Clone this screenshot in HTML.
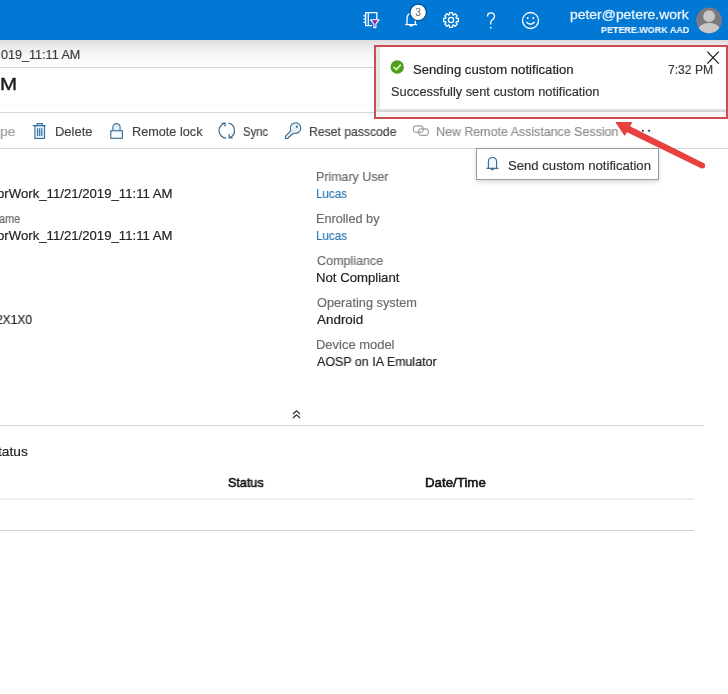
<!DOCTYPE html>
<html><head><meta charset="utf-8"><style>
html,body{margin:0;padding:0;width:728px;height:694px;overflow:hidden;background:#fff;}
body{position:relative;font-family:"Liberation Sans",sans-serif;}
.t{position:absolute;white-space:nowrap;will-change:transform;-webkit-text-stroke:0.18px currentColor;}
</style></head><body>
<div style="position:absolute;left:0px;top:0px;width:728px;height:40px;background:#0078d4"></div>
<div style="position:absolute;left:0px;top:40px;width:728px;height:27px;background:linear-gradient(#dedede,#eeeeee 30%,#f6f6f6 55%,#fbfbfb 80%,#fcfcfc)"></div>
<div style="position:absolute;left:0px;top:67px;width:728px;height:1px;background:#d2d2d2"></div>
<div class="t" style="left:1.00px;top:48.98px;font-size:12.6px;line-height:12.6px;color:#3c3c3c;font-weight:normal;">019_11:11 AM</div>
<div class="t" style="left:-0.09px;top:76.44px;font-size:17.2px;line-height:17.2px;color:#1e1e1e;font-weight:normal;-webkit-text-stroke:0.4px #1e1e1e;transform:scaleX(1.1917);transform-origin:0 0;">M</div>
<div style="position:absolute;left:0px;top:105px;width:728px;height:1px;background:#f7f7f7"></div>
<div style="position:absolute;left:0px;top:111.6px;width:728px;height:1.2px;background:#d8d8d8"></div>
<div style="position:absolute;left:0px;top:148.3px;width:728px;height:1.2px;background:#dadada"></div>
<div class="t" style="left:-0.50px;top:126.35px;font-size:12.7px;line-height:12.7px;color:#a0a0a0;font-weight:normal;transform:scaleX(1.1071);transform-origin:0 0;">pe</div>
<div class="t" style="left:55.18px;top:126.35px;font-size:12.7px;line-height:12.7px;color:#444;font-weight:normal;transform:scaleX(1.0229);transform-origin:0 0;">Delete</div>
<div class="t" style="left:132.01px;top:126.35px;font-size:12.7px;line-height:12.7px;color:#444;font-weight:normal;transform:scaleX(0.9943);transform-origin:0 0;">Remote lock</div>
<div class="t" style="left:243.00px;top:126.35px;font-size:12.7px;line-height:12.7px;color:#444;font-weight:normal;transform:scaleX(0.8929);transform-origin:0 0;">Sync</div>
<div class="t" style="left:308.54px;top:126.35px;font-size:12.7px;line-height:12.7px;color:#444;font-weight:normal;transform:scaleX(0.9611);transform-origin:0 0;">Reset passcode</div>
<div class="t" style="left:435.77px;top:126.35px;font-size:12.7px;line-height:12.7px;color:#8e8e8e;font-weight:normal;transform:scaleX(0.9797);transform-origin:0 0;">New Remote Assistance Session</div>
<div class="t" style="left:316.32px;top:171.15px;font-size:12.7px;line-height:12.7px;color:#6b6b6b;font-weight:normal;transform:scaleX(0.9788);transform-origin:0 0;">Primary User</div>
<div class="t" style="left:316.38px;top:187.90px;font-size:12.7px;line-height:12.7px;color:#2b79b5;font-weight:normal;transform:scaleX(0.9152);transform-origin:0 0;">Lucas</div>
<div class="t" style="left:316.30px;top:213.15px;font-size:12.7px;line-height:12.7px;color:#6b6b6b;font-weight:normal;transform:scaleX(0.9952);transform-origin:0 0;">Enrolled by</div>
<div class="t" style="left:316.38px;top:229.90px;font-size:12.7px;line-height:12.7px;color:#2b79b5;font-weight:normal;transform:scaleX(0.9152);transform-origin:0 0;">Lucas</div>
<div class="t" style="left:317.30px;top:255.15px;font-size:12.7px;line-height:12.7px;color:#6b6b6b;font-weight:normal;transform:scaleX(0.9881);transform-origin:0 0;">Compliance</div>
<div class="t" style="left:316.26px;top:271.90px;font-size:12.7px;line-height:12.7px;color:#222;font-weight:normal;transform:scaleX(1.0375);transform-origin:0 0;">Not Compliant</div>
<div class="t" style="left:317.30px;top:297.15px;font-size:12.7px;line-height:12.7px;color:#6b6b6b;font-weight:normal;transform:scaleX(1.0051);transform-origin:0 0;">Operating system</div>
<div class="t" style="left:317.30px;top:313.90px;font-size:12.7px;line-height:12.7px;color:#222;font-weight:normal;transform:scaleX(1.0581);transform-origin:0 0;">Android</div>
<div class="t" style="left:316.28px;top:339.15px;font-size:12.7px;line-height:12.7px;color:#6b6b6b;font-weight:normal;transform:scaleX(1.0213);transform-origin:0 0;">Device model</div>
<div class="t" style="left:317.30px;top:355.90px;font-size:12.7px;line-height:12.7px;color:#222;font-weight:normal;transform:scaleX(0.9828);transform-origin:0 0;">AOSP on IA Emulator</div>
<div class="t" style="left:-3.20px;top:188.15px;font-size:12.7px;line-height:12.7px;color:#222;font-weight:normal;transform:scaleX(1.0384);transform-origin:0 0;">orWork_11/21/2019_11:11 AM</div>
<div class="t" style="left:-0.80px;top:213.15px;font-size:12.7px;line-height:12.7px;color:#6b6b6b;font-weight:normal;transform:scaleX(0.8667);transform-origin:0 0;">ame</div>
<div class="t" style="left:-3.20px;top:229.90px;font-size:12.7px;line-height:12.7px;color:#222;font-weight:normal;transform:scaleX(1.0384);transform-origin:0 0;">orWork_11/21/2019_11:11 AM</div>
<div class="t" style="left:-4.50px;top:313.65px;font-size:12.7px;line-height:12.7px;color:#222;font-weight:normal;transform:scaleX(0.9474);transform-origin:0 0;">2X1X0</div>
<div style="position:absolute;left:0px;top:425px;width:704px;height:1px;background:#d6d6d6"></div>
<div class="t" style="left:-2.00px;top:445.19px;font-size:13.6px;line-height:13.6px;color:#222;font-weight:normal;transform:scaleX(1.0103);transform-origin:0 0;">tatus</div>
<div class="t" style="left:227.60px;top:476.96px;font-size:12.8px;line-height:12.8px;color:#111;font-weight:normal;-webkit-text-stroke:0.55px #111;transform:scaleX(0.9806);transform-origin:0 0;">Status</div>
<div class="t" style="left:425.21px;top:476.96px;font-size:12.8px;line-height:12.8px;color:#111;font-weight:normal;-webkit-text-stroke:0.55px #111;transform:scaleX(1.0388);transform-origin:0 0;">Date/Time</div>
<div style="position:absolute;left:0px;top:498px;width:694px;height:2px;background:#ededed"></div>
<div style="position:absolute;left:0px;top:530px;width:694px;height:1px;background:#cfcfcf"></div>
<div class="t" style="left:569.98px;top:8.30px;font-size:13.7px;line-height:13.7px;color:#eaf3fb;font-weight:normal;-webkit-text-stroke:0.3px #eaf3fb;transform:scaleX(1.0174);transform-origin:0 0;">peter@petere.work</div>
<div class="t" style="left:601.00px;top:24.97px;font-size:9.6px;line-height:9.6px;color:#eaf3fb;font-weight:bold;transform:scaleX(0.9340);transform-origin:0 0;">PETERE.WORK AAD</div>
<div style="position:absolute;left:376px;top:46.5px;width:349.5px;height:70.5px;background:#fbf6f6"></div>
<div style="position:absolute;left:376px;top:46.5px;width:349.5px;height:62.7px;background:linear-gradient(90deg,#e6e4e8,#eeecf0 50%,#f6f5f7)"></div>
<div style="position:absolute;left:380px;top:46.5px;width:344.5px;height:62.7px;background:#fff"></div>
<div style="position:absolute;left:376px;top:109.2px;width:349.5px;height:3.3px;background:linear-gradient(#e2e2e2,#d2d2d2)"></div>
<div style="position:absolute;left:374px;top:44.5px;width:353.5px;height:74px;border:2px solid #cc4c55;box-sizing:border-box"></div>
<div class="t" style="left:413.39px;top:63.40px;font-size:13.0px;line-height:13.0px;color:#222;font-weight:normal;transform:scaleX(1.0101);transform-origin:0 0;">Sending custom notification</div>
<div class="t" style="left:667.60px;top:64.49px;font-size:12.0px;line-height:12.0px;color:#3c3c3c;font-weight:normal;transform:scaleX(1.0091);transform-origin:0 0;">7:32 PM</div>
<div class="t" style="left:390.90px;top:85.66px;font-size:12.8px;line-height:12.8px;color:#333;font-weight:normal;">Successfully sent custom notification</div>
<div style="position:absolute;left:476px;top:148px;width:183px;height:32px;border:1px solid #9a9a9a;background:#fff;box-sizing:border-box;box-shadow:0 2px 5px rgba(0,0,0,0.16)"></div>
<div class="t" style="left:507.69px;top:158.50px;font-size:13.0px;line-height:13.0px;color:#333;font-weight:normal;transform:scaleX(1.0093);transform-origin:0 0;">Send custom notification</div>


<svg width="728" height="694" style="position:absolute;left:0;top:0">
 <!-- directory icon -->
 <g fill="none" stroke="#fff" stroke-width="1.3">
  <path d="M372 25.6 L365.6 25.6 L365.6 12.6 L376.8 12.6 L376.8 19.6"/>
  <line x1="368.3" y1="13" x2="368.3" y2="25.3"/>
  <line x1="363.4" y1="15.8" x2="365.6" y2="15.8"/><line x1="363.4" y1="19.1" x2="365.6" y2="19.1"/><line x1="363.4" y1="22.4" x2="365.6" y2="22.4"/>
 </g>
 <path d="M370.6 19.8 L379 19.8 L375.9 23.8 L375.9 27.6 L373.9 27.6 L373.9 23.8 Z" fill="#8c1a8e" stroke="#fff" stroke-width="1.1" stroke-linejoin="round"/>
 <!-- bell -->
 <path d="M405.3 24.6 L417 24.6 M407 24.6 L407 18.6 Q407 13.6 411.2 13.6 Q415.4 13.6 415.4 18.6 L415.4 24.6 M409.4 24.9 Q411.2 27.3 413 24.9" fill="none" stroke="#fff" stroke-width="1.3"/>
 <circle cx="418.2" cy="12.4" r="8.8" fill="#00508f"/><circle cx="418.2" cy="12.4" r="7.6" fill="#fff"/>
 <text x="418.1" y="15.6" font-family="Liberation Sans" font-size="10.4" fill="#666" text-anchor="middle" style="-webkit-text-stroke:0.15px #666">3</text>
 <!-- gear -->
 <g fill="none" stroke="#fff" stroke-width="1.3">
  <circle cx="451" cy="20" r="2.6"/>
  <path id="gear" d=""/>
 </g>
 <path d="M456.35 18.35 L458.35 18.51 L458.35 21.49 L456.35 21.65 L455.95 22.61 L457.25 24.14 L455.14 26.25 L453.61 24.95 L452.65 25.35 L452.49 27.35 L449.51 27.35 L449.35 25.35 L448.39 24.95 L446.86 26.25 L444.75 24.14 L446.05 22.61 L445.65 21.65 L443.65 21.49 L443.65 18.51 L445.65 18.35 L446.05 17.39 L444.75 15.86 L446.86 13.75 L448.39 15.05 L449.35 14.65 L449.51 12.65 L452.49 12.65 L452.65 14.65 L453.61 15.05 L455.14 13.75 L457.25 15.86 L455.95 17.39 Z" fill="none" stroke="#fff" stroke-width="1.3" stroke-linejoin="round"/>
 <!-- question -->
 <path d="M487.5 16.5 Q487.5 12.8 491 12.8 Q494.5 12.8 494.5 16.3 Q494.5 18.5 491.8 20.3 Q490.8 21 490.8 23 L490.8 24.5" fill="none" stroke="#fff" stroke-width="1.3"/>
 <circle cx="490.8" cy="27.6" r="0.9" fill="#fff"/>
 <!-- smiley -->
 <circle cx="530.5" cy="20.5" r="8" fill="none" stroke="#fff" stroke-width="1.3"/>
 <circle cx="527.7" cy="18" r="1" fill="#fff"/><circle cx="533.3" cy="18" r="1" fill="#fff"/>
 <path d="M526.3 22 Q530.5 26.5 534.7 22" fill="none" stroke="#fff" stroke-width="1.3"/>
 <!-- avatar -->
 <circle cx="709" cy="20.4" r="12.8" fill="#7b797d"/>
 <clipPath id="av"><circle cx="709" cy="20.4" r="12.8"/></clipPath>
 <g clip-path="url(#av)">
  <circle cx="709.1" cy="16.2" r="5.9" fill="#c8c8c8"/>
  <ellipse cx="709.1" cy="31.5" rx="11.2" ry="8.8" fill="#c8c8c8"/>
 </g>
 <!-- trash -->
 <g fill="none" stroke="#356f9f" stroke-width="1.15">
  <rect x="34.9" y="125.6" width="9.6" height="12.8" fill="#e2f1fb"/>
  <path d="M32.6 125.6 L45.6 125.6"/>
  <path d="M37.2 125.4 L37.2 123.6 L42.2 123.6 L42.2 125.4"/>
  <path d="M37.6 128.3 L37.6 136.1 M39.7 128.3 L39.7 136.1 M41.8 128.3 L41.8 136.1"/>
 </g>
 <!-- lock -->
 <g fill="none" stroke="#3f6f94" stroke-width="1.15">
  <path d="M112.9 130.6 L112.9 127.2 A3.6 3.6 0 0 1 120.1 127.2 L120.1 130.6" fill="#e4f4fc"/>
  <rect x="110.8" y="130.7" width="11.6" height="7.6" fill="#f2fafe"/>
 </g>
 <!-- sync -->
 <g fill="none" stroke="#3d6a8c" stroke-width="1.2">
  <path d="M225.4 123.1 A7.6 7.6 0 0 0 226.3 138.2"/>
  <path d="M228.6 123.1 A7.6 7.6 0 0 1 229.6 137.6"/>
  <path d="M221.7 123.3 L225 123.3 L225 126.6"/>
  <path d="M229.2 134.3 L229.2 137.8 L232.6 137.8"/>
 </g>
 <!-- key -->
 <path d="M290.8 130.6 L285.4 136.4 L285.4 138.5 L287.8 138.5 L288.6 137.7 L288.6 136.8 L289.6 136.8 L290.6 135.8 L290.6 135 L291.6 135 L293.7 133.1 A5.3 5.3 0 1 0 290.8 130.6 Z" fill="#e2f2fb" stroke="#3d6a8c" stroke-width="1.1" stroke-linejoin="round"/>
 <circle cx="296.9" cy="126.8" r="1.05" fill="#2f5a78"/>
 <!-- link -->
 <g fill="none" stroke="#9c9c9c" stroke-width="1.1">
  <rect x="413.3" y="125.9" width="10" height="6.5" rx="3.25"/>
  <rect x="418.4" y="128.9" width="10" height="6.5" rx="3.25"/>
 </g>
 <!-- dots -->
 <circle cx="636.7" cy="130.8" r="1.0" fill="#222"/><circle cx="642.9" cy="130.8" r="1.0" fill="#222"/><circle cx="649.1" cy="130.8" r="1.0" fill="#222"/>
 <!-- dropdown bell -->
 <path d="M488.4 168.3 L488.4 161.8 Q488.4 157.5 492.5 157.5 Q496.6 157.5 496.6 161.8 L496.6 168.3 Z" fill="#eef7fd" stroke="none"/><path d="M486.5 168.4 L498.5 168.4 M488.4 168.4 L488.4 161.8 Q488.4 157.5 492.5 157.5 Q496.6 157.5 496.6 161.8 L496.6 168.4 M490.9 168.6 Q492.5 171 494.1 168.6" fill="none" stroke="#3f6e90" stroke-width="1.2"/>
 <!-- chevrons -->
 <path d="M293 414 L296.5 410.8 L300 414 M293 418 L296.5 414.8 L300 418" fill="none" stroke="#333" stroke-width="1.3"/>
 <!-- check circle -->
 <circle cx="397.2" cy="67" r="6.7" fill="#4f9e1f"/>
 <path d="M393.6 66.8 L396.4 69.6 L400.8 64.6" fill="none" stroke="#d2f7b0" stroke-width="1.7"/>
 <!-- close X -->
 <path d="M707.3 51.6 L718.8 63.6 M718.8 51.6 L707.3 63.6" stroke="#1a1a1a" stroke-width="1.2"/>
 <!-- arrow -->
 <path d="M624.50 131.05 L701.02 168.20 L703.58 163.00 L627.50 124.95 Z" fill="#e8403f"/><circle cx="702.3" cy="165.6" r="2.9" fill="#e8403f"/>
 <path d="M616 122.5 L631.7 122.5 L624.7 135.3 Z" fill="#e8403f" stroke="#e8403f" stroke-width="1" stroke-linejoin="round"/>
</svg>

</body></html>
